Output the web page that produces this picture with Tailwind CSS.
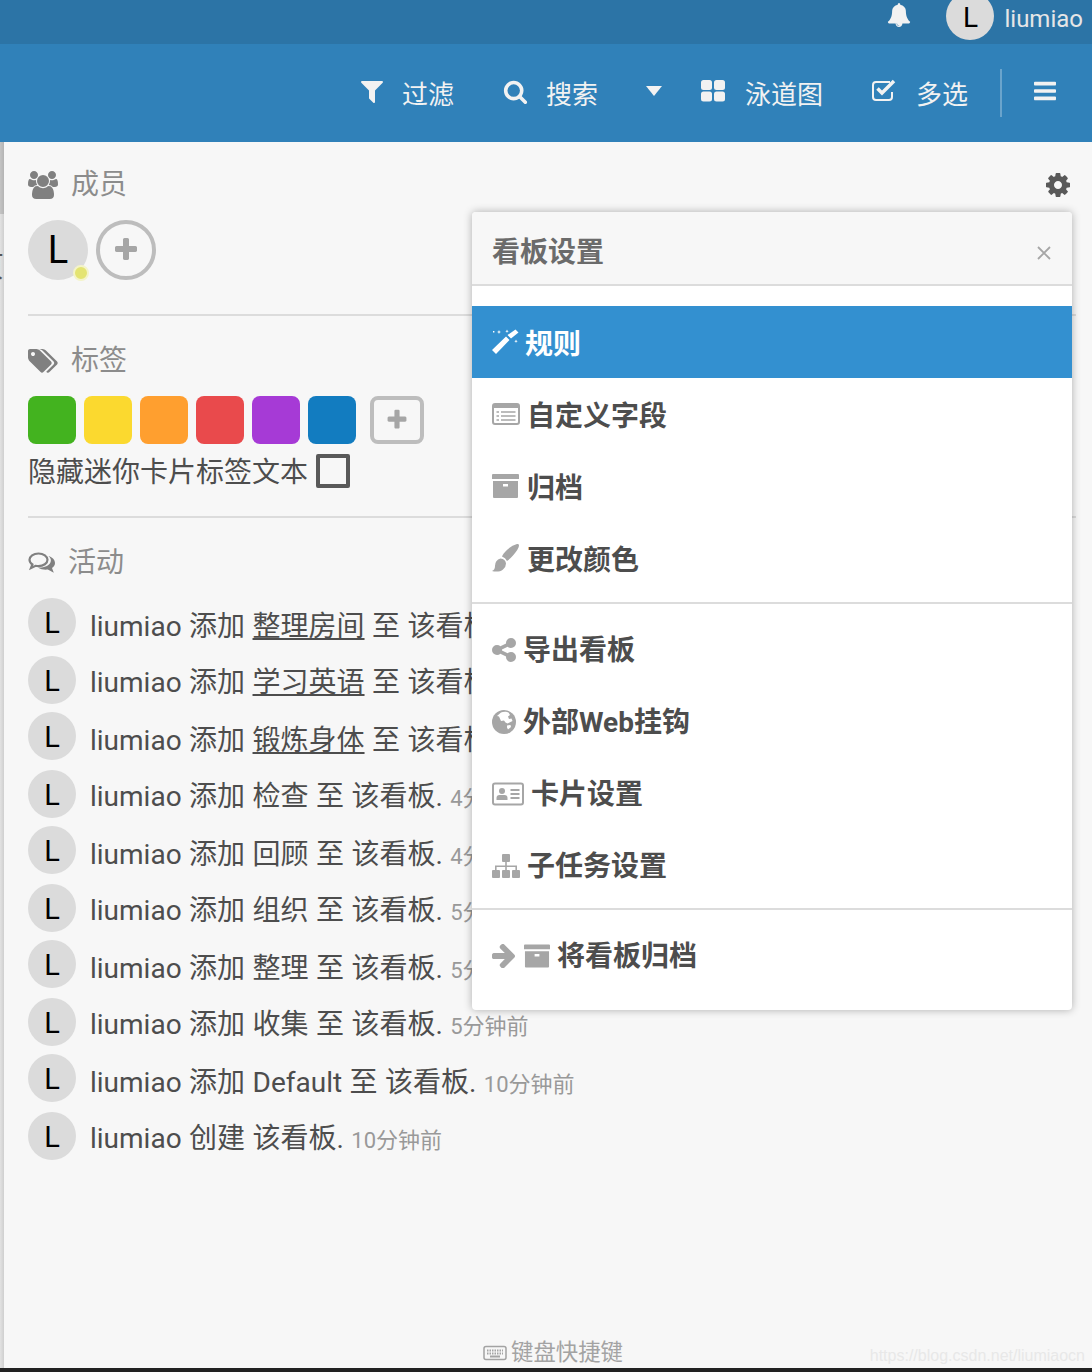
<!DOCTYPE html>
<html lang="zh">
<head>
  <meta charset="UTF-8">
  <title>看板设置</title>
  <script src="https://cdn.jsdelivr.net/npm/@tailwindcss/browser@4"></script>
</head>
<body class="bg-[#f7f7f7] text-[#4d4d4d] font-['Roboto','Noto_Sans_CJK_SC',sans-serif]">
  <div class="relative flex h-[1372px] w-[1092px] flex-col overflow-hidden">
    <!-- top bar -->
    <header class="flex h-11 shrink-0 items-center justify-end bg-[#2c74a6] pr-[9px] text-[#e6e6e6]">
      <svg class="mr-[35px] mb-[14px] h-6 w-6 fill-[#f2f2f2]" viewBox="0 0 1792 1792"><path d="M912 1696q0-16-16-16-59 0-101.5-42.5t-42.5-101.5q0-16-16-16t-16 16q0 73 51.5 124.5t124.5 51.5q16 0 16-16zm816-288q0 52-38 90t-90 38h-448q0 106-75 181t-181 75-181-75-75-181h-448q-52 0-90-38t-38-90q50-42 91-88t85-119.5 74.5-158.5 50-206 19.5-260q0-152 117-282.5t307-158.5q-8-19-8-39 0-40 28-68t68-28 68 28 28 68q0 20-8 39 190 28 307 158.5t117 282.5q0 139 19.5 260t50 206 74.5 158.5 85 119.5 91 88z"/></svg>
      <div class="mb-3 flex h-12 w-12 items-center justify-center rounded-full bg-[#dbdbdb] pt-1 text-[28px] text-black">L</div>
      <span class="mb-1.5 ml-2.5 text-2xl">liumiao</span>
    </header>
    <!-- board bar -->
    <nav class="flex h-[98px] shrink-0 items-center justify-end bg-[#3081b9] pr-9 text-[26px] text-[#f2f2f2]">
      <svg class="mb-1 h-7 w-7 fill-[#f2f2f2]" viewBox="0 0 1792 1792"><path d="M1595 295q17 41-14 70l-493 493v742q0 42-39 59-13 5-25 5-27 0-45-19l-256-256q-19-19-19-45v-486l-493-493q-31-29-14-70 17-39 59-39h1280q42 0 59 39z"/></svg>
      <span class="mt-1 ml-4">过滤</span>
      <svg class="mb-1 ml-[49px] h-[25px] w-[25px] fill-[#f2f2f2]" viewBox="0 0 1792 1792"><path d="M1216 832q0-185-131.5-316.5t-316.5-131.5-316.5 131.5-131.5 316.5 131.5 316.5 316.5 131.5 316.5-131.5 131.5-316.5zm512 832q0 52-38 90t-90 38q-54 0-90-38l-343-342q-179 124-399 124-143 0-273.5-55.5t-225-150-150-225-55.5-273.5 55.5-273.5 150-225 225-150 273.5-55.5 273.5 55.5 225 150 150 225 55.5 273.5q0 220-124 399l343 343q37 37 37 90z"/></svg>
      <span class="mt-1 ml-[18px]">搜索</span>
      <svg class="mb-1 ml-12 h-2.5 w-4 fill-[#f2f2f2]" viewBox="0 0 16 10"><path d="M0 0h16L8 10z"/></svg>
      <svg class="mb-1 ml-[39px] h-6 w-6 fill-[#f2f2f2]" viewBox="0 0 24 24"><rect x="0" y="1" width="11" height="10" rx="2.5"/><rect x="13" y="1" width="11" height="10" rx="2.5"/><rect x="0" y="12.5" width="11" height="10" rx="2.5"/><rect x="13" y="12.5" width="11" height="10" rx="2.5"/></svg>
      <span class="mt-1 ml-5">泳道图</span>
      <svg class="mb-1 ml-[49px] h-6 w-6" viewBox="0 0 24 24" fill="none" stroke="#f2f2f2"><path stroke-width="2" d="M20 13v5q0 3-3 3H4q-3 0-3-3V6q0-3 3-3h14"/><path stroke-width="3.5" d="M5.500 9.500l4.500 4.500 12-12"/></svg>
      <span class="mt-1 ml-5">多选</span>
      <div class="mx-8 h-12 w-0.5 bg-[#6aa4cc]"></div>
      <svg class="mb-1 h-[26px] w-[22px] fill-[#f2f2f2]" viewBox="0 0 1536 1792"><path d="M1536 1344v128q0 26-19 45t-45 19H64q-26 0-45-19t-19-45v-128q0-26 19-45t45-19h1408q26 0 45 19t19 45zm0-512v128q0 26-19 45t-45 19H64q-26 0-45-19t-19-45V832q0-26 19-45t45-19h1408q26 0 45 19t19 45zm0-512v128q0 26-19 45t-45 19H64q-26 0-45-19t-19-45V320q0-26 19-45t45-19h1408q26 0 45 19t19 45z"/></svg>
    </nav>

    <div class="relative flex min-h-0 flex-1">
      <!-- strip of the page behind the sidebar -->
      <div class="relative flex w-1 shrink-0 flex-col overflow-hidden bg-gradient-to-r from-[#e2e2e2] to-[#cfcfcf]">
        <div class="h-[72px] bg-gradient-to-r from-[#c4c4c4] to-[#b4b4b4]"></div>
        <span class="absolute top-[110px] right-0 text-[28px] leading-8 text-[#555]">页</span>
      </div>

      <main class="flex min-w-0 flex-1 flex-col pt-[27px] pr-4 pl-6">
        <div class="flex h-8 items-center justify-between text-[#8c8c8c]">
          <div class="flex items-center">
            <svg class="h-[28px] w-[30px] fill-[#808080]" viewBox="0 0 1920 1792"><path d="M593 896q-162 5-265 128h-134q-82 0-138-40.5t-56-118.5q0-353 124-353 6 0 43.5 21t97.5 42.5 119 21.5q67 0 133-23-5 37-5 66 0 139 81 256zm1071 637q0 120-73 189.5t-194 69.5h-874q-121 0-194-69.5t-73-189.5q0-53 3.5-103.5t14-109 26.5-108.5 43-97.5 62-81 85.5-53.5 111.5-20q10 0 43 21.5t73 48 107 48 135 21.5 135-21.5 107-48 73-48 43-21.5q61 0 111.5 20t85.5 53.5 62 81 43 97.5 26.5 108.5 14 109 3.5 103.5zm-1024-1277q0 106-75 181t-181 75-181-75-75-181 75-181 181-75 181 75 75 181zm704 384q0 159-112.5 271.5t-271.5 112.5-271.5-112.5-112.5-271.5 112.5-271.5 271.5-112.5 271.5 112.5 112.5 271.5zm576 225q0 78-56 118.5t-138 40.5h-134q-103-123-265-128 81-117 81-256 0-29-5-66 66 23 133 23 59 0 119-21.5t97.5-42.5 43.5-21q124 0 124 353zm-128-609q0 106-75 181t-181 75-181-75-75-181 75-181 181-75 181 75 75 181z"/></svg>
            <span class="ml-[13px] text-[28px] leading-8">成员</span>
          </div>
          <svg class="mr-1 h-7 w-7 fill-[#595959]" viewBox="0 0 1792 1792"><path d="M1152 896q0-106-75-181t-181-75-181 75-75 181 75 181 181 75 181-75 75-181zm512-109v222q0 12-8 23t-20 13l-185 28q-19 54-39 91 35 50 107 138 10 12 10 25t-9 23q-27 37-99 108t-94 71q-12 0-26-9l-138-108q-44 23-91 38-16 136-29 186-7 28-36 28h-222q-14 0-24.5-8.5t-11.5-21.5l-28-184q-49-16-90-37l-141 107q-10 9-25 9-14 0-25-11-126-114-165-168-7-10-7-23 0-12 8-23 15-21 51-66.5t54-70.5q-27-50-41-99l-183-27q-13-2-21-12.5t-8-23.5v-222q0-12 8-23t19-13l186-28q14-46 39-92-40-57-107-138-10-12-10-24 0-10 9-23 26-36 98.5-107.5t94.5-71.5q13 0 26 10l138 107q44-23 91-38 16-136 29-186 7-28 36-28h222q14 0 24.5 8.5t11.5 21.5l28 184q49 16 90 37l142-107q9-9 24-9 13 0 25 10 129 119 165 170 7 8 7 22 0 12-8 23-15 21-51 66.5t-54 70.5q26 50 41 98l183 28q13 2 21 12.5t8 23.5z"/></svg>
        </div>

        <div class="mt-[19px] flex gap-2">
          <div class="relative flex h-[60px] w-[60px] items-center justify-center rounded-full bg-[#dbdbdb] text-[38px] text-black">L
            <span class="absolute right-[-1px] bottom-[-1px] h-4 w-4 rounded-full border-2 border-[#f4f4c8] bg-[#e4e472]"></span>
          </div>
          <div class="flex h-[60px] w-[60px] items-center justify-center rounded-full border-4 border-[#bdbdbd]">
            <svg class="h-7 w-7 fill-[#a6a6a6]" viewBox="0 0 1792 1792"><path d="M1600 736v192q0 40-28 68t-68 28h-416v416q0 40-28 68t-68 28h-192q-40 0-68-28t-28-68v-416h-416q-40 0-68-28t-28-68v-192q0-40 28-68t68-28h416v-416q0-40 28-68t68-28h192q40 0 68 28t28 68v416h416q40 0 68 28t28 68z"/></svg>
          </div>
        </div>

        <div class="mt-[34px] h-0.5 bg-[#dcdcdc]"></div>

        <div class="mt-[29px] flex h-8 items-center text-[#8c8c8c]">
          <svg class="h-[28px] w-[30px] fill-[#808080]" viewBox="0 0 1920 1792"><path d="M448 448q0-53-37.5-90.5t-90.5-37.5-90.5 37.5-37.5 90.5 37.5 90.5 90.5 37.5 90.5-37.5 37.5-90.5zm1067 576q0 53-37 90l-491 492q-39 37-91 37-53 0-90-37l-715-716q-38-37-64.5-101t-26.5-117v-416q0-52 38-90t90-38h416q53 0 117 26.5t102 64.5l715 714q37 39 37 91zm384 0q0 53-37 90l-491 492q-39 37-91 37-36 0-59-14t-53-45l470-470q37-37 37-90 0-52-37-91l-715-714q-38-38-102-64.5t-117-26.5h224q53 0 117 26.5t102 64.5l715 714q37 39 37 91z"/></svg>
          <span class="ml-[13px] text-[28px] leading-8">标签</span>
        </div>

        <div class="mt-[19px] flex gap-2">
          <div class="h-12 w-12 rounded-lg bg-[#43b31f]"></div>
          <div class="h-12 w-12 rounded-lg bg-[#fbd92f]"></div>
          <div class="h-12 w-12 rounded-lg bg-[#ff9f2f]"></div>
          <div class="h-12 w-12 rounded-lg bg-[#e94a4c]"></div>
          <div class="h-12 w-12 rounded-lg bg-[#a63ad6]"></div>
          <div class="h-12 w-12 rounded-lg bg-[#127cc0]"></div>
          <div class="ml-1.5 flex h-12 w-[54px] items-center justify-center rounded-lg border-4 border-[#bdbdbd]">
            <svg class="h-6 w-6 fill-[#a6a6a6]" viewBox="0 0 1792 1792"><path d="M1600 736v192q0 40-28 68t-68 28h-416v416q0 40-28 68t-68 28h-192q-40 0-68-28t-28-68v-416h-416q-40 0-68-28t-28-68v-192q0-40 28-68t68-28h416v-416q0-40 28-68t68-28h192q40 0 68 28t28 68v416h416q40 0 68 28t28 68z"/></svg>
          </div>
        </div>

        <div class="mt-2.5 flex h-[34px] items-center">
          <span class="mt-1 text-[28px] leading-[34px]">隐藏迷你卡片标签文本</span>
          <span class="ml-2 h-[34px] w-[34px] rounded-[2px] border-4 border-[#595959]"></span>
        </div>

        <div class="mt-7 h-0.5 bg-[#dcdcdc]"></div>

        <div class="mt-[29px] flex h-8 items-center text-[#8c8c8c]">
          <svg class="h-[28px] w-[28px]" viewBox="0 0 28 28"><path fill="none" stroke="#808080" stroke-width="2.200" d="M10.500 4.500C5.400 4.500 1.500 7.200 1.500 10.800c0 1.900 1.100 3.500 2.900 4.700L3 19l4.600-2.200c.9.200 1.900.3 2.900.3 5 0 9-2.800 9-6.300s-4-6.300-9-6.300z"/><path fill="#808080" d="M20.500 7c4 1.300 6.500 4 6.500 7 0 2-1.100 3.800-3 5l1.800 4.800-6-3.300c-3 .4-7.200-.1-9.800-2 5 .4 11-1 12.600-5.500.7-2 .2-4.200-2.100-6z"/></svg>
          <span class="ml-3 text-[28px] leading-8">活动</span>
        </div>

        <ul class="mt-[19px] flex flex-col whitespace-nowrap text-[28px]">
          <li class="flex h-[58px] items-start">
            <div class="flex h-12 w-12 shrink-0 items-center justify-center rounded-full bg-[#dbdbdb] pt-[3px] text-[29px] text-black">L</div>
            <p class="mt-[9px] ml-3.5 leading-10 [word-spacing:0.5px]">liumiao 添加 <u>整理房间</u> 至 该看板. <span class="text-[22px] text-[#999]">4分钟前</span></p>
          </li>
          <li class="flex h-[56px] items-start">
            <div class="flex h-12 w-12 shrink-0 items-center justify-center rounded-full bg-[#dbdbdb] pt-[3px] text-[29px] text-black">L</div>
            <p class="mt-[7px] ml-3.5 leading-10 [word-spacing:0.5px]">liumiao 添加 <u>学习英语</u> 至 该看板. <span class="text-[22px] text-[#999]">4分钟前</span></p>
          </li>
          <li class="flex h-[58px] items-start">
            <div class="flex h-12 w-12 shrink-0 items-center justify-center rounded-full bg-[#dbdbdb] pt-[3px] text-[29px] text-black">L</div>
            <p class="mt-[9px] ml-3.5 leading-10 [word-spacing:0.5px]">liumiao 添加 <u>锻炼身体</u> 至 该看板. <span class="text-[22px] text-[#999]">4分钟前</span></p>
          </li>
          <li class="flex h-[56px] items-start">
            <div class="flex h-12 w-12 shrink-0 items-center justify-center rounded-full bg-[#dbdbdb] pt-[3px] text-[29px] text-black">L</div>
            <p class="mt-[7px] ml-3.5 leading-10 [word-spacing:0.5px]">liumiao 添加 检查 至 该看板. <span class="text-[22px] text-[#999]">4分钟前</span></p>
          </li>
          <li class="flex h-[58px] items-start">
            <div class="flex h-12 w-12 shrink-0 items-center justify-center rounded-full bg-[#dbdbdb] pt-[3px] text-[29px] text-black">L</div>
            <p class="mt-[9px] ml-3.5 leading-10 [word-spacing:0.5px]">liumiao 添加 回顾 至 该看板. <span class="text-[22px] text-[#999]">4分钟前</span></p>
          </li>
          <li class="flex h-[56px] items-start">
            <div class="flex h-12 w-12 shrink-0 items-center justify-center rounded-full bg-[#dbdbdb] pt-[3px] text-[29px] text-black">L</div>
            <p class="mt-[7px] ml-3.5 leading-10 [word-spacing:0.5px]">liumiao 添加 组织 至 该看板. <span class="text-[22px] text-[#999]">5分钟前</span></p>
          </li>
          <li class="flex h-[58px] items-start">
            <div class="flex h-12 w-12 shrink-0 items-center justify-center rounded-full bg-[#dbdbdb] pt-[3px] text-[29px] text-black">L</div>
            <p class="mt-[9px] ml-3.5 leading-10 [word-spacing:0.5px]">liumiao 添加 整理 至 该看板. <span class="text-[22px] text-[#999]">5分钟前</span></p>
          </li>
          <li class="flex h-[56px] items-start">
            <div class="flex h-12 w-12 shrink-0 items-center justify-center rounded-full bg-[#dbdbdb] pt-[3px] text-[29px] text-black">L</div>
            <p class="mt-[7px] ml-3.5 leading-10 [word-spacing:0.5px]">liumiao 添加 收集 至 该看板. <span class="text-[22px] text-[#999]">5分钟前</span></p>
          </li>
          <li class="flex h-[58px] items-start">
            <div class="flex h-12 w-12 shrink-0 items-center justify-center rounded-full bg-[#dbdbdb] pt-[3px] text-[29px] text-black">L</div>
            <p class="mt-[9px] ml-3.5 leading-10 [word-spacing:0.5px]">liumiao 添加 Default 至 该看板. <span class="text-[22px] text-[#999]">10分钟前</span></p>
          </li>
          <li class="flex h-[56px] items-start">
            <div class="flex h-12 w-12 shrink-0 items-center justify-center rounded-full bg-[#dbdbdb] pt-[3px] text-[29px] text-black">L</div>
            <p class="mt-[7px] ml-3.5 leading-10 [word-spacing:0.5px]">liumiao 创建 该看板. <span class="text-[22px] text-[#999]">10分钟前</span></p>
          </li>
        </ul>

        <footer class="mt-auto flex h-8 items-center justify-center pt-0.5 pl-[2px] text-[22.4px] text-[#a3a3a3]">
          <svg class="mr-1 h-4 w-6" viewBox="0 0 24 16" fill="none" stroke="#a3a3a3"><rect x="1" y="1.500" width="22" height="13" rx="2" stroke-width="1.500"/><path stroke-width="2" stroke-dasharray="1.500 1" d="M4 5.500h16M4 8.500h16"/><path stroke-width="2" d="M7 11.500h10"/></svg>
          <span>键盘快捷键</span>
        </footer>
      </main>

      <!-- board settings popup -->
      <section class="absolute top-[70px] left-[472px] flex h-[798px] w-[600px] flex-col rounded bg-white shadow-[0_0_8px_rgba(0,0,0,0.3)]">
        <div class="flex h-[74px] shrink-0 items-center justify-between rounded-t border-b-2 border-[#dcdcdc] bg-[#f7f7f7] pt-2.5 pr-5 pl-5">
          <h2 class="text-[28px] font-bold text-[#6b6b6b]">看板设置</h2>
          <svg class="h-4 w-4" viewBox="0 0 16 16" stroke="#a6a6a6" stroke-width="1.800"><path d="M2 2l12 12M14 2L2 14"/></svg>
        </div>
        <ul class="mt-5 text-[28px] font-bold">
          <li class="flex h-[72px] items-center bg-[#3390d0] pl-5 text-white">
            <svg class="mr-1.5 h-[26px] w-[27px] fill-white" viewBox="0 0 27 26"><path d="M0 21l4 4L17.500 11 14 7.500zM15.500 6L19 9.500l7.500-6-3-3z"/><path d="M7 1l.6 1.400L9 3l-1.400.6L7 5l-.6-1.400L5 3l1.400-.6zM15 .500l.5 1.200 1.200.5-1.200.5L15 3.900l-.5-1.200-1.200-.5 1.200-.5zM24 10.500l.5 1.200 1.200.5-1.200.5-.5 1.200-.5-1.200-1.200-.5 1.200-.5zM1 2h1.400v1.400H1z"/></svg>
            <span class="mt-1.5">规则</span>
          </li>
          <li class="flex h-[72px] items-center pl-5">
            <svg class="mr-[7px] h-6 w-7" viewBox="0 0 28 24" fill="none" stroke="#a6a6a6"><rect x="1" y="2" width="26" height="20" rx="2" stroke-width="2"/><path stroke-width="3" d="M2 4.500h24"/><path stroke-width="1.500" d="M4.500 10h2.500M9 10h14.500M4.500 14h2.500M9 14h14.500M4.500 18h2.500M9 18h14.500"/></svg>
            <span class="mt-1.5">自定义字段</span>
          </li>
          <li class="flex h-[72px] items-center pl-5">
            <svg class="mr-2 h-6 w-[27px] fill-[#a6a6a6]" viewBox="0 0 27 24"><path d="M1 0h25q1 0 1 1v4H0V1q0-1 1-1zM1 7h25v16q0 1-1 1H2q-1 0-1-1zm10 3v2.500h5V10z"/></svg>
            <span class="mt-1.5">归档</span>
          </li>
          <li class="flex h-[72px] items-center pl-5">
            <svg class="mr-2 h-7 w-[27px] fill-[#a6a6a6]" viewBox="0 0 27 28"><path d="M26 0q1 0 1 1.500 0 3-6 10-3.500 4-6 5.500-1.500-3.500-5-4.500 1-3 5.500-7C20 1.500 24 0 26 0zM8.500 14.500q5 .5 5.500 5 0 3.500-3 6C8.500 28 3 28 0 27q3-1 3-5 0-6 5.500-7.500z"/></svg>
            <span class="mt-1.5">更改颜色</span>
          </li>
        </ul>
        <div class="mt-2 h-0.5 shrink-0 bg-[#dcdcdc]"></div>
        <ul class="mt-2.5 text-[28px] font-bold">
          <li class="flex h-[72px] items-center pl-5">
            <svg class="mr-[7px] h-7 w-6 fill-[#a6a6a6]" viewBox="0 0 1536 1792"><path d="M1216 1024q133 0 226.500 93.500t93.500 226.500-93.500 226.500-226.500 93.500-226.500-93.500-93.500-226.500q0-12 2-34l-360-180q-92 86-218 86-133 0-226.500-93.500t-93.500-226.500 93.500-226.500 226.500-93.500q126 0 218 86l360-180q-2-22-2-34 0-133 93.500-226.500t226.500-93.500 226.500 93.500 93.500 226.500-93.500 226.500-226.500 93.500q-126 0-218-86l-360 180q2 22 2 34t-2 34l360 180q92-86 218-86z"/></svg>
            <span class="mt-0.5">导出看板</span>
          </li>
          <li class="flex h-[72px] items-center pl-5">
            <svg class="mr-[7px] h-6 w-6" viewBox="0 0 24 24"><circle cx="12" cy="12" r="12" fill="#a6a6a6"/><path fill="#fff" d="M9 2.500C11 1.500 15 1.500 16.500 2.500L18 5l-2 1.500 1 2.500 2.500-.5 1 2.500-3 1.500-2 1-2-1-1.500-2-3 .5L7 6.500 5 6zM15 15.500l3.500-.5.5 2-3 2.500-1-2z"/></svg>
            <span class="mt-0.5">外部Web挂钩</span>
          </li>
          <li class="flex h-[72px] items-center pl-5">
            <svg class="mr-[7px] h-6 w-8" viewBox="0 0 32 24" fill="none" stroke="#a6a6a6"><rect x="1" y="1.500" width="30" height="21" rx="2" stroke-width="2"/><circle cx="10" cy="9" r="3" fill="#a6a6a6" stroke="none"/><path fill="#a6a6a6" stroke="none" d="M4.500 18v-2q0-3 3-3h5q3 0 3 3v2z"/><path stroke-width="2" d="M18.500 8h9M18.500 12h9M18.500 16h9"/></svg>
            <span class="mt-0.5">卡片设置</span>
          </li>
          <li class="flex h-[72px] items-center pl-5">
            <svg class="mr-[7px] h-6 w-7" viewBox="0 0 28 24" fill="#a6a6a6"><rect x="10" y="0" width="8" height="8" rx="1"/><rect x="0" y="16" width="8" height="8" rx="1"/><rect x="10" y="16" width="8" height="8" rx="1"/><rect x="20" y="16" width="8" height="8" rx="1"/><path d="M13.200 8h1.600v3.500H25V16h-1.600v-3H14.800v3h-1.600v-3H4.600v3H3v-4.500h10.200z"/></svg>
            <span class="mt-0.5">子任务设置</span>
          </li>
        </ul>
        <div class="mt-1.5 h-0.5 shrink-0 bg-[#dcdcdc]"></div>
        <ul class="mt-2.5 text-[28px] font-bold">
          <li class="flex h-[72px] items-center pl-5">
            <svg class="mr-2 h-6 w-6 fill-[#a6a6a6]" viewBox="192 192 1408 1528"><path d="M1600 960q0 54-37 91l-651 651q-39 37-91 37-51 0-90-37l-75-75q-38-38-38-91t38-91l293-293h-704q-52 0-84.500-37.500t-32.500-90.500v-128q0-53 32.500-90.500t84.500-37.500h704l-293-294q-38-36-38-90t38-90l75-75q38-38 90-38 53 0 91 38l651 651q37 35 37 90z"/></svg>
            <svg class="mr-[7px] h-6 w-[26px] fill-[#a6a6a6]" viewBox="0 0 27 24"><path d="M1 0h25q1 0 1 1v4H0V1q0-1 1-1zM1 7h25v16q0 1-1 1H2q-1 0-1-1zm10 3v2.500h5V10z"/></svg>
            <span class="mt-0.5">将看板归档</span>
          </li>
        </ul>
      </section>

      <span class="absolute right-[7px] bottom-0 font-['Liberation_Sans',sans-serif] text-base text-[#e8e8e8]">https://blog.csdn.net/liumiaocn</span>
    </div>
    <div class="h-1 shrink-0 bg-[#222]"></div>
  </div>
</body>
</html>
